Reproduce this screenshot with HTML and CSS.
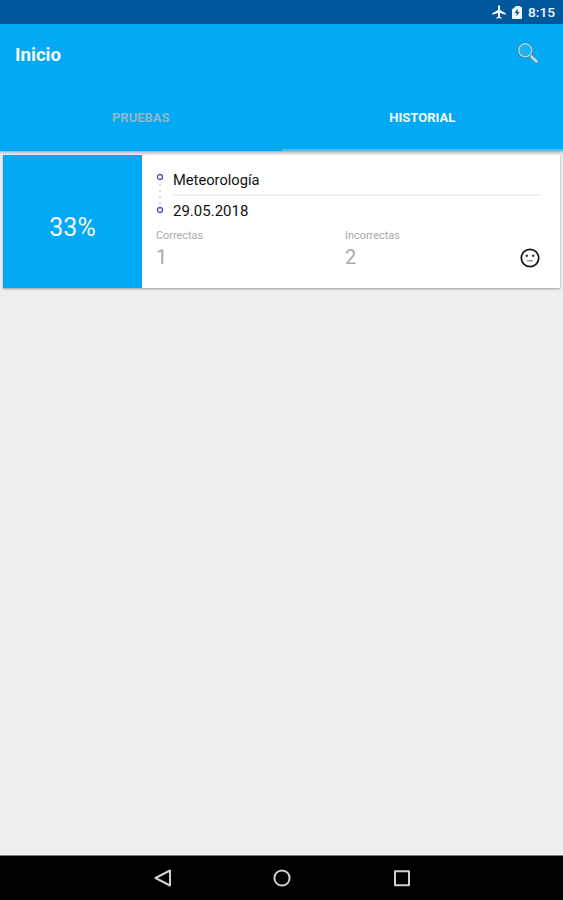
FILE: index.html
```html
<!DOCTYPE html>
<html lang="es">
<head>
<meta charset="utf-8">
<title>Inicio</title>
<link rel="stylesheet" href="styles.css">
</head>
<body>
<div class="status">
  <svg class="plane" viewBox="0 0 24 24"><path d="M22 16v-2l-8.500-5V3.500a1.500 1.500 0 0 0-3 0V9L2 14v2l8.500-2.500V19L8 20.500V22l4-1 4 1v-1.500L13.500 19v-5.500z"/></svg>
  <svg class="battery" viewBox="0 0 10 13"><path d="M3 1 4 0h4l.6 1H9a1 1 0 0 1 1 1v10a1 1 0 0 1-1 1H1a1 1 0 0 1-1-1V3.500z"/><path class="bolt" d="M5.600 2.800 2.500 7.100h2v3.100l3.200-4.400h-2.100z"/></svg>
  <span class="clock">8:15</span>
</div>
<header class="appbar">
  <div class="toolbar">
    <h1>Inicio</h1>
    <svg class="search" viewBox="0 0 22 22"><path class="handle-edge" d="m14 14 5.500 5.500"/><path class="handle" d="m14 14 5.500 5.500"/><circle class="rim" cx="8.300" cy="8.300" r="6.600"/><circle class="glass" cx="8.300" cy="8.300" r="6.600"/></svg>
  </div>
  <nav class="tabs">
    <div class="tab">PRUEBAS</div>
    <div class="tab active">HISTORIAL</div>
  </nav>
</header>
<main>
  <article class="card">
    <div class="score">33%</div>
    <div class="details">
      <div class="summary">
        <svg class="route" viewBox="0 0 8 42"><circle cx="4" cy="4" r="2.500"/><path d="M4 11v22"/><circle cx="4" cy="37" r="2.500"/></svg>
        <div class="lines">
          <div class="subject">Meteorología</div>
          <div class="date">29.05.2018</div>
        </div>
      </div>
      <div class="results">
        <div class="result"><span class="label">Correctas</span><span class="value">1</span></div>
        <div class="result"><span class="label">Incorrectas</span><span class="value">2</span></div>
        <svg class="face" viewBox="0 0 20 20"><circle class="outline" cx="10" cy="10" r="8.700"/><circle cx="6.800" cy="7.800" r="1.200"/><circle cx="13.200" cy="7.800" r="1.200"/><path d="M7 12.700h6"/></svg>
      </div>
    </div>
  </article>
</main>
<footer class="navbar">
  <svg viewBox="0 0 20 20"><path d="M18 2.500v15L3.500 10z"/></svg>
  <svg viewBox="0 0 20 20"><circle cx="10" cy="10" r="7.600"/></svg>
  <svg viewBox="0 0 20 20"><path d="M3 3.200h14v14H3z"/></svg>
</footer>
</body>
</html>
```
FILE: styles.css
```css
* { box-sizing: border-box; }
body {
  margin: 0;
  height: 900px;
  display: flex;
  flex-direction: column;
  overflow: hidden;
  background: #eee;
  font-family: Roboto, sans-serif;
  color: #111;
}
svg { display: block; flex: none; }
.status {
  height: 24px;
  flex: none;
  display: flex;
  align-items: center;
  justify-content: flex-end;
  padding-right: 8px;
  background: #01579b;
  color: #f4faff;
}
.plane { width: 16px; height: 16px; margin-right: 5px; fill: #f4faff; }
.battery { width: 10px; height: 13px; margin-right: 6px; fill: #f4faff; }
.battery .bolt { fill: #01579b; }
.clock { width: 27px; font-size: 13.7px; font-weight: 500; line-height: 23px; padding-top: 1px; }
.appbar {
  height: 127px;
  flex: none;
  background: #03a9f4;
  box-shadow: 0 1px 3px rgba(80, 50, 50, .5);
  z-index: 1;
}
.toolbar {
  height: 62px;
  display: flex;
  align-items: center;
  justify-content: space-between;
  padding: 0 24px 0 15px;
}
.toolbar h1 { margin: 0; font-size: 18.7px; font-weight: 700; color: #f4fcff; }
.search { width: 22px; height: 22px; margin-bottom: 5px; fill: none; stroke-linecap: round; }
.rim { stroke: #4b7180; stroke-width: 2.6; }
.glass { stroke: #a9dce8; stroke-width: 1.3; fill: #20b3f3; }
.handle-edge { stroke: #5b8796; stroke-width: 4; }
.handle { stroke: #b5e2ef; stroke-width: 2.5; }
.tabs { height: 65px; display: flex; }
.tab {
  flex: 1;
  padding-top: 1px;
  text-align: center;
  font-size: 13px;
  font-weight: 700;
  line-height: 62px;
  color: #8fb8cd;
  border-bottom: 2px solid transparent;
}
.tab.active { color: #f4fcff; border-color: #4bc0f5; }
main { flex: 1; padding: 4px 3px; }
.card {
  height: 133px;
  display: flex;
  background: #fff;
  box-shadow: 0 1px 2px rgba(0, 0, 0, .35);
}
.score {
  width: 139px;
  display: flex;
  align-items: center;
  justify-content: center;
  padding-top: 12px;
  background: #03a9f4;
  color: #effaff;
  font-size: 25px;
}
.details { flex: 1; padding: 10px 19px 0 14px; }
.summary { display: flex; }
.route { width: 8px; height: 42px; margin: 8px 9px 0 0; fill: #fff; stroke: #6254b5; stroke-width: 1.4; }
.route path { stroke: #b0aec5; stroke-width: 1; stroke-dasharray: 2 4; }
.lines { flex: 1; font-size: 14.7px; }
.subject { height: 31px; line-height: 30px; border-bottom: 2px solid #f0f0f0; }
.date { height: 32px; line-height: 30px; font-size: 15px; }
.results { display: flex; margin-top: 1px; }
.result { width: 189px; display: flex; flex-direction: column; color: #aaa; }
.label { font-size: 10.9px; line-height: 14px; }
.value { font-size: 20px; line-height: 28px; }
.face { width: 20px; height: 20px; margin: 19px 0 0 -14px; fill: #333; stroke: #999; stroke-width: 1.5; }
.face .outline { fill: none; stroke: #151515; stroke-width: 1.7; }
.face circle { stroke: none; }
.navbar {
  height: 45px;
  flex: none;
  display: flex;
  justify-content: center;
  align-items: center;
  gap: 100px;
  background: #000;
  border-top: 1px solid #777;
  box-shadow: 0 -1px 1px #fff;
}
.navbar svg { width: 20px; height: 20px; fill: none; stroke: #d0d0d0; stroke-width: 2; stroke-linejoin: round; }
```
